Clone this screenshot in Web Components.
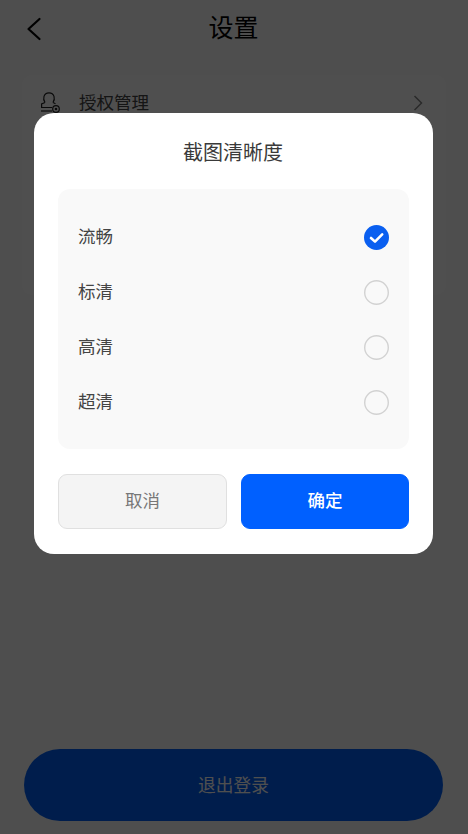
<!DOCTYPE html>
<html lang="zh">
<head>
<meta charset="utf-8">
<title>设置</title>
<style>
html, body { margin: 0; height: 100%; }
body { font-family: "Noto Sans CJK SC", "Liberation Sans", sans-serif; }
</style>
</head>
<body>
<settings-page>
  <nav-bar>设置</nav-bar>
  <menu-card>
    <menu-row>授权管理</menu-row>
  </menu-card>
  <logout-button slot="footer">退出登录</logout-button>
  <option-dialog slot="dialog" heading="截图清晰度">
    <option-row checked>流畅</option-row>
    <option-row>标清</option-row>
    <option-row>高清</option-row>
    <option-row>超清</option-row>
    <dialog-button slot="actions">取消</dialog-button>
    <dialog-button slot="actions" primary>确定</dialog-button>
  </option-dialog>
</settings-page>

<script>
class SettingsPage extends HTMLElement {
  constructor() {
    super();
    this.attachShadow({ mode: "open" }).innerHTML = `
    <style>
    :host {
      display: flex;
      flex-direction: column;
      position: relative;
      height: 834px;
      overflow: hidden;
      background: #fbfbfb;
    }
    .main { flex: 1 1 auto; }
    .foot { padding: 0 25px 13px 24px; }
    .mask {
      position: absolute;
      inset: 0;
      background: rgba(0, 0, 0, .69);
    }
    .dialog { position: absolute; left: 34px; top: 113px; width: 399px; }
    </style>
    <div class="main"><slot></slot></div>
    <div class="foot"><slot name="footer"></slot></div>
    <div class="mask"></div>
    <div class="dialog"><slot name="dialog"></slot></div>`;
  }
}

class NavBar extends HTMLElement {
  constructor() {
    super();
    this.attachShadow({ mode: "open" }).innerHTML = `
    <style>
    :host { display: block; height: 56px; position: relative; }
    .title {
      padding-right: 1px;
      text-align: center;
      font-size: 25px;
      line-height: 52px;
      color: #000;
    }
    svg { position: absolute; left: 26px; top: 17px; }
    </style>
    <svg width="16" height="24" viewBox="0 0 16 24" fill="none" stroke="#000" stroke-width="2.2" stroke-linecap="round" stroke-linejoin="round"><path d="M13.5 2 L2.5 12 L13.5 22"/></svg>
    <div class="title"><slot></slot></div>`;
  }
}

class MenuCard extends HTMLElement {
  constructor() {
    super();
    this.attachShadow({ mode: "open" }).innerHTML = `
    <style>
    :host {
      display: block;
      margin: 19px 22px 0;
      height: 220px;
      border-radius: 10px;
      background: #fff;
    }
    </style>
    <slot></slot>`;
  }
}

class MenuRow extends HTMLElement {
  constructor() {
    super();
    this.attachShadow({ mode: "open" }).innerHTML = `
    <style>
    :host {
      display: flex;
      align-items: center;
      height: 56px;
      padding: 0 23px 0 18px;
      font-size: 17.5px;
      color: #444;
    }
    .label { flex: 1 1 auto; margin-left: 18px; padding-bottom: 4px; }
    </style>
    <svg width="21" height="22" viewBox="0 0 21 22" fill="none" stroke="#222" stroke-width="1.2"><path d="M5 10.5 C2.5 7 3.5 .8 9 .8 C14.5 .8 15.5 7 13 10.5"/><path d="M5 10.5 L1.6 12 L1.6 15.5 L12 15.5"/><path d="M13 10.5 L15.5 11.8"/><path d="M1 19 L12 19"/><circle cx="16" cy="17" r="3.3"/><circle cx="16" cy="17" r=".7" fill="#222"/></svg>
    <span class="label"><slot></slot></span>
    <svg width="10" height="16" viewBox="0 0 10 16" fill="none" stroke="#888" stroke-width="1.5"><path d="M1.5 1 L8.5 8 L1.5 15"/></svg>`;
  }
}

class LogoutButton extends HTMLElement {
  constructor() {
    super();
    this.attachShadow({ mode: "open" }).innerHTML = `
    <style>
    :host {
      display: flex;
      align-items: center;
      justify-content: center;
      box-sizing: border-box;
      height: 72px;
      padding-bottom: 3px;
      border-radius: 36px;
      background: #005ef5;
      color: #fff;
      font-size: 17.7px;
    }
    </style>
    <slot></slot>`;
  }
}

class OptionDialog extends HTMLElement {
  static get observedAttributes() { return ["heading"]; }
  constructor() {
    super();
    this.attachShadow({ mode: "open" }).innerHTML = `
    <style>
    :host {
      display: block;
      box-sizing: border-box;
      height: 441px;
      padding: 0 24px 0 24px;
      border-radius: 20px;
      background: #fff;
    }
    h2 {
      margin: 0;
      height: 76px;
      line-height: 77px;
      padding-right: 1px;
      text-align: center;
      font-size: 20px;
      font-weight: 400;
      color: #3a3a3a;
    }
    .options {
      box-sizing: border-box;
      height: 260px;
      padding: 20.5px 20px 20px 20px;
      border-radius: 12px;
      background: #f9f9f9;
    }
    .actions {
      display: grid;
      grid-template-columns: 169px 168px;
      justify-content: space-between;
      margin-top: 25px;
    }
    </style>
    <h2></h2>
    <div class="options"><slot></slot></div>
    <div class="actions"><slot name="actions"></slot></div>`;
  }
  attributeChangedCallback(name, old, value) {
    this.shadowRoot.querySelector("h2").textContent = value;
  }
}

class OptionRow extends HTMLElement {
  constructor() {
    super();
    this.attachShadow({ mode: "open" }).innerHTML = `
    <style>
    :host {
      display: flex;
      align-items: center;
      justify-content: space-between;
      height: 55px;
      font-size: 17.5px;
      color: #444;
    }
    .text { padding-bottom: 3px; }
    .radio { display: block; }
    </style>
    <span class="text"><slot></slot></span>
    <svg class="radio" width="25" height="25" viewBox="0 0 25 25"></svg>`;
  }
  connectedCallback() {
    this.shadowRoot.querySelector("svg").innerHTML = this.hasAttribute("checked")
      ? '<circle cx="12.5" cy="12.5" r="12.5" fill="#0a5ff0"/><path d="M7 13 L11 16.6 L18.2 9.4" fill="none" stroke="#fff" stroke-width="2.6" stroke-linecap="round" stroke-linejoin="round"/>'
      : '<circle cx="12.5" cy="12.5" r="11.8" fill="none" stroke="#d2d2d2" stroke-width="1.4"/>';
  }
}

class DialogButton extends HTMLElement {
  constructor() {
    super();
    this.attachShadow({ mode: "open" }).innerHTML = `
    <style>
    :host {
      display: flex;
      align-items: center;
      justify-content: center;
      box-sizing: border-box;
      height: 55px;
      padding-bottom: 5px;
      border-radius: 9px;
      border: 1.5px solid #e0e0e0;
      background: #f4f4f4;
      color: #777;
      font-size: 17.5px;
    }
    :host([primary]) {
      border-color: #0060ff;
      background: #0060ff;
      color: #fff;
      font-weight: 500;
      padding-bottom: 4px;
    }
    </style>
    <slot></slot>`;
  }
}

customElements.define("settings-page", SettingsPage);
customElements.define("nav-bar", NavBar);
customElements.define("menu-card", MenuCard);
customElements.define("menu-row", MenuRow);
customElements.define("logout-button", LogoutButton);
customElements.define("option-dialog", OptionDialog);
customElements.define("option-row", OptionRow);
customElements.define("dialog-button", DialogButton);
</script>
</body>
</html>
